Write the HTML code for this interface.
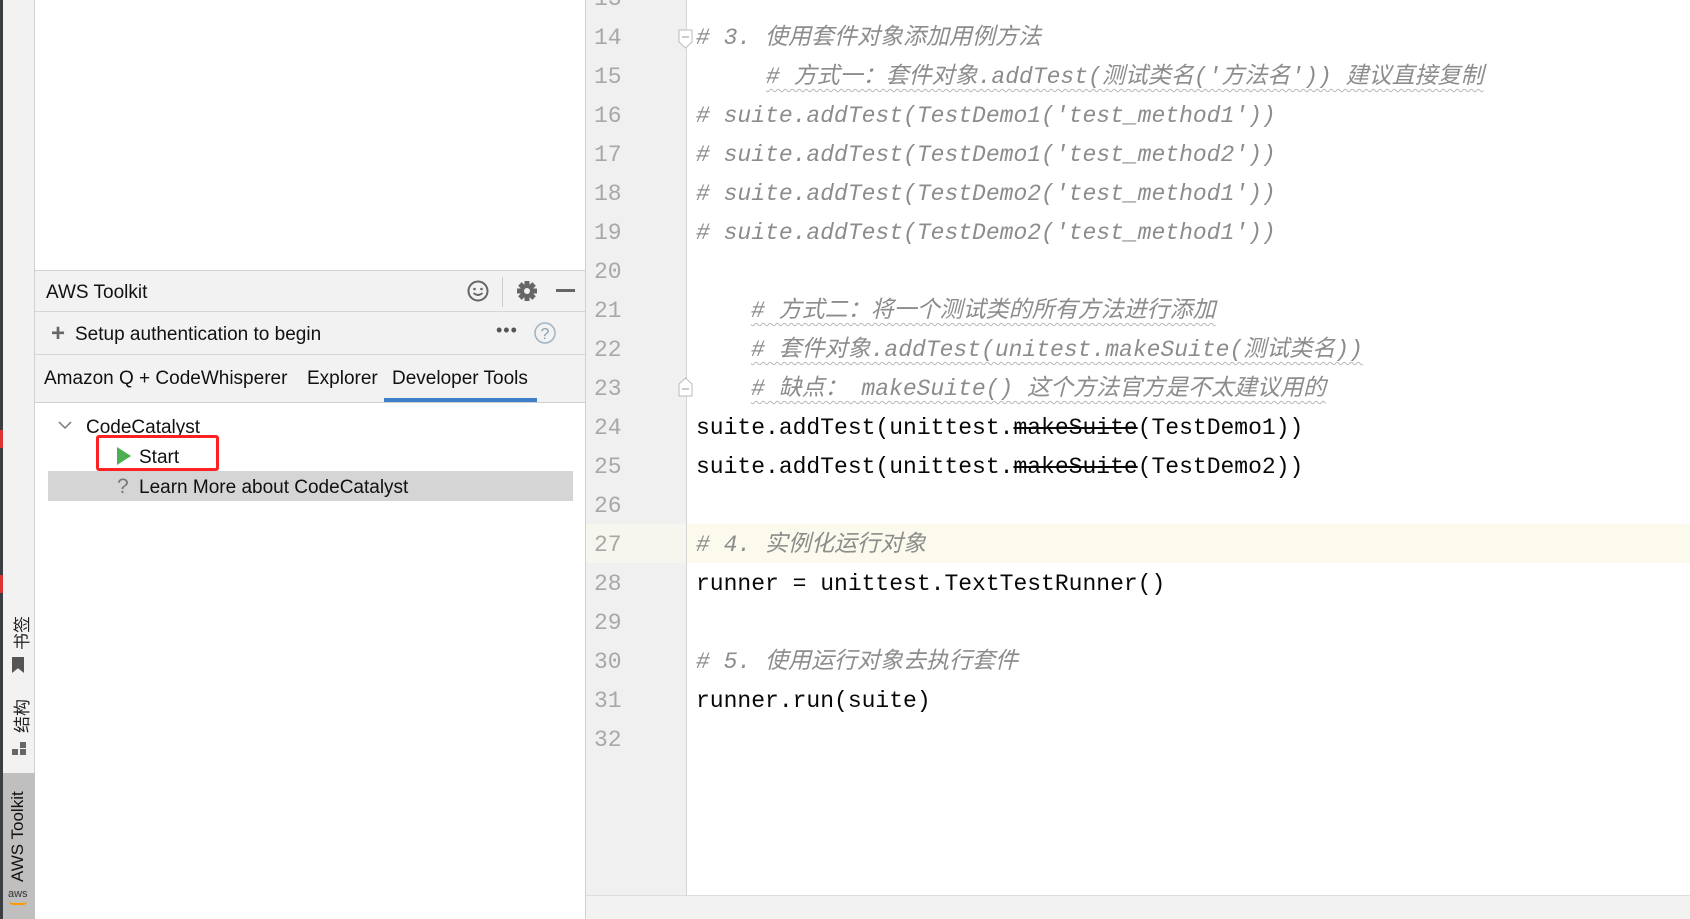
<!DOCTYPE html>
<html><head><meta charset="utf-8"><style>
*{margin:0;padding:0;box-sizing:border-box}
body{width:1690px;height:919px;position:relative;overflow:hidden;background:#fff;font-family:"Liberation Sans","Noto Sans CJK SC",sans-serif}
.a{position:absolute}
.ln{position:absolute;left:594px;width:40px;font:23px "Liberation Mono","Noto Sans CJK SC",monospace;color:#a8a8a8;line-height:39px}
.cd{position:absolute;font:23px "Liberation Mono","Noto Sans CJK SC",monospace;color:#080808;line-height:39px;white-space:pre}
.cm{color:#8c8c8c;font-style:italic}
.wv{text-decoration:underline wavy #b8b8b8 1px;text-underline-offset:5px}
s{text-decoration:line-through}
.ui{font-size:19px;color:#111}
.e{margin-top:2px}
</style></head><body>
<div class="a" style="left:0;top:0;width:35px;height:919px;background:#f2f2f2;border-right:1px solid #d0d0d0"></div>
<div class="a" style="left:0;top:0;width:3px;height:919px;background:#3c3f41"></div>
<div class="a" style="left:0;top:430px;width:3px;height:18px;background:#d33"></div>
<div class="a" style="left:0;top:575px;width:3px;height:18px;background:#d33"></div>
<div class="a" style="left:3px;top:773px;width:32px;height:146px;background:#bfbfbf"></div>
<div class="a" style="left:8px;top:620px;width:24px;transform-origin:0 0;transform:rotate(-90deg) translate(-30px,0);font-size:17px;color:#222;white-space:nowrap">书签</div>
<div class="a" style="left:12px;top:657px;width:12px;height:16px;background:#555;clip-path:polygon(0 0,100% 0,100% 100%,50% 70%,0 100%)"></div>
<div class="a" style="left:8px;top:703px;transform-origin:0 0;transform:rotate(-90deg) translate(-30px,0);font-size:17px;color:#222;white-space:nowrap">结构</div>
<div class="a" style="left:20px;top:742px;width:6px;height:6px;background:#666"></div>
<div class="a" style="left:12px;top:749px;width:6px;height:6px;background:#666"></div>
<div class="a" style="left:20px;top:749px;width:6px;height:6px;background:#666"></div>
<div class="a" style="left:8px;top:882px;transform-origin:0 0;transform:rotate(-90deg);font-size:17px;color:#111;white-space:nowrap">AWS Toolkit</div>
<div class="a" style="left:8px;top:888px;font-size:11px;color:#333">aws</div>
<div class="a" style="left:9px;top:901px;width:18px;height:4px;border-bottom:2px solid #f90;border-radius:0 0 10px 10px"></div>

<div class="a" style="left:35px;top:270px;width:551px;height:133px;background:#f2f2f2;border-top:1px solid #d0d0d0"></div>
<div class="a" style="left:35px;top:311px;width:551px;height:1px;background:#d6d6d6"></div>
<div class="a" style="left:35px;top:354px;width:551px;height:1px;background:#d6d6d6"></div>
<div class="a" style="left:35px;top:402px;width:551px;height:1px;background:#d0d0d0"></div>
<div class="a" style="left:585px;top:0;width:1px;height:919px;background:#d0d0d0"></div>
<div class="a ui" style="left:46px;top:282px">AWS Toolkit</div>
<svg class="a" style="left:466px;top:279px" width="24" height="24"><circle cx="12" cy="12" r="9.5" fill="none" stroke="#666" stroke-width="2"/><circle cx="8.5" cy="10" r="1.3" fill="#666"/><circle cx="15.5" cy="10" r="1.3" fill="#666"/><path d="M7.5 14q4.5 4 9 0" fill="none" stroke="#666" stroke-width="1.8"/></svg>
<div class="a" style="left:502px;top:277px;width:1px;height:30px;background:#ccc"></div>
<svg class="a" style="left:515px;top:279px" width="24" height="24"><g fill="#666" transform="translate(12 12)"><circle r="7"/><rect x="-2.5" y="-10" width="5" height="20"/><rect x="-2.5" y="-10" width="5" height="20" transform="rotate(45)"/><rect x="-2.5" y="-10" width="5" height="20" transform="rotate(90)"/><rect x="-2.5" y="-10" width="5" height="20" transform="rotate(135)"/></g><circle cx="12" cy="12" r="3" fill="#f2f2f2"/></svg>
<div class="a" style="left:556px;top:289px;width:19px;height:3px;background:#666"></div>
<div class="a" style="left:51px;top:320px;font-size:24px;color:#666;font-weight:bold">+</div>
<div class="a ui" style="left:75px;top:324px">Setup authentication to begin</div>
<div class="a" style="left:496px;top:320px;font-size:18px;color:#555;letter-spacing:1px">•••</div>
<svg class="a" style="left:533px;top:321px" width="24" height="24"><circle cx="12" cy="12" r="10" fill="none" stroke="#9fb3c2" stroke-width="1.5"/><text x="12" y="18" text-anchor="middle" font-size="16" fill="#8aa0b0" font-family="Liberation Sans">?</text></svg>
<div class="a ui" style="left:44px;top:368px">Amazon Q + CodeWhisperer</div>
<div class="a ui" style="left:307px;top:368px">Explorer</div>
<div class="a ui" style="left:392px;top:368px">Developer Tools</div>
<div class="a" style="left:384px;top:398px;width:153px;height:4px;background:#3f7fca"></div>

<svg class="a" style="left:58px;top:421px" width="14" height="10"><path d="M1 1l6 6 6-6" fill="none" stroke="#777" stroke-width="1.5"/></svg>
<div class="a ui" style="left:86px;top:417px">CodeCatalyst</div>
<div class="a" style="left:48px;top:471px;width:525px;height:30px;background:#d5d5d5"></div>
<div class="a" style="left:117px;top:447px;width:0;height:0;border-left:14px solid #4caf50;border-top:9px solid transparent;border-bottom:9px solid transparent"></div>
<div class="a ui" style="left:139px;top:447px">Start</div>
<div class="a" style="left:96px;top:435px;width:123px;height:36px;border:3px solid #f22;border-radius:3px"></div>
<div class="a" style="left:117px;top:475px;font-size:21px;color:#777">?</div>
<div class="a ui" style="left:139px;top:477px">Learn More about CodeCatalyst</div>

<div class="a" style="left:586px;top:0;width:100px;height:895px;background:#f0f0f0"></div>
<div class="a" style="left:686px;top:0;width:1px;height:895px;background:#d5d5d5"></div>
<div class="a" style="left:687px;top:524px;width:1003px;height:39px;background:#fcfaed"></div>
<div class="a" style="left:586px;top:524px;width:100px;height:39px;background:#f7f6ee"></div>
<div class="a" style="left:586px;top:895px;width:1104px;height:24px;background:#f2f2f2;border-top:1px solid #ddd"></div>
<svg class="a" style="left:678px;top:29px" width="16" height="20"><path d="M1 1h13v12l-6.5 6L1 13z" fill="#fff" stroke="#bbb"/><path d="M4 8h7" stroke="#999"/></svg>
<svg class="a" style="left:678px;top:377px" width="16" height="20"><path d="M1 19h13V7L7.5 1 1 7z" fill="#fff" stroke="#bbb"/><path d="M4 12h7" stroke="#999"/></svg>

<div class="ln e" style="top:-22px">13</div>
<div class="ln e" style="top:17px">14</div><div class="ln e" style="top:56px">15</div><div class="ln e" style="top:95px">16</div><div class="ln e" style="top:134px">17</div><div class="ln e" style="top:173px">18</div><div class="ln e" style="top:212px">19</div><div class="ln e" style="top:251px">20</div><div class="ln e" style="top:290px">21</div><div class="ln e" style="top:329px">22</div><div class="ln e" style="top:368px">23</div><div class="ln e" style="top:407px">24</div><div class="ln e" style="top:446px">25</div><div class="ln e" style="top:485px">26</div><div class="ln e" style="top:524px">27</div><div class="ln e" style="top:563px">28</div><div class="ln e" style="top:602px">29</div><div class="ln e" style="top:641px">30</div><div class="ln e" style="top:680px">31</div><div class="ln e" style="top:719px">32</div>

<div class="cd cm e" style="left:696px;top:17px"># 3. 使用套件对象添加用例方法</div>
<div class="cd cm e" style="left:766px;top:56px"><span class="wv"># 方式一：套件对象.addTest(测试类名('方法名')) 建议直接复制</span></div>
<div class="cd cm e" style="left:696px;top:95px"># suite.addTest(TestDemo1('test_method1'))</div>
<div class="cd cm e" style="left:696px;top:134px"># suite.addTest(TestDemo1('test_method2'))</div>
<div class="cd cm e" style="left:696px;top:173px"># suite.addTest(TestDemo2('test_method1'))</div>
<div class="cd cm e" style="left:696px;top:212px"># suite.addTest(TestDemo2('test_method1'))</div>
<div class="cd cm e" style="left:751px;top:290px"><span class="wv"># 方式二：将一个测试类的所有方法进行添加</span></div>
<div class="cd cm e" style="left:751px;top:329px"><span class="wv"># 套件对象.addTest(unitest.makeSuite(测试类名))</span></div>
<div class="cd cm e" style="left:751px;top:368px"><span class="wv"># 缺点： makeSuite() 这个方法官方是不太建议用的</span></div>
<div class="cd e" style="left:696px;top:407px">suite.addTest(unittest.<s>makeSuite</s>(TestDemo1))</div>
<div class="cd e" style="left:696px;top:446px">suite.addTest(unittest.<s>makeSuite</s>(TestDemo2))</div>
<div class="cd cm e" style="left:696px;top:524px"># 4. 实例化运行对象</div>
<div class="cd e" style="left:696px;top:563px">runner = unittest.TextTestRunner()</div>
<div class="cd cm e" style="left:696px;top:641px"># 5. 使用运行对象去执行套件</div>
<div class="cd e" style="left:696px;top:680px">runner.run(suite)</div>
</body></html>
